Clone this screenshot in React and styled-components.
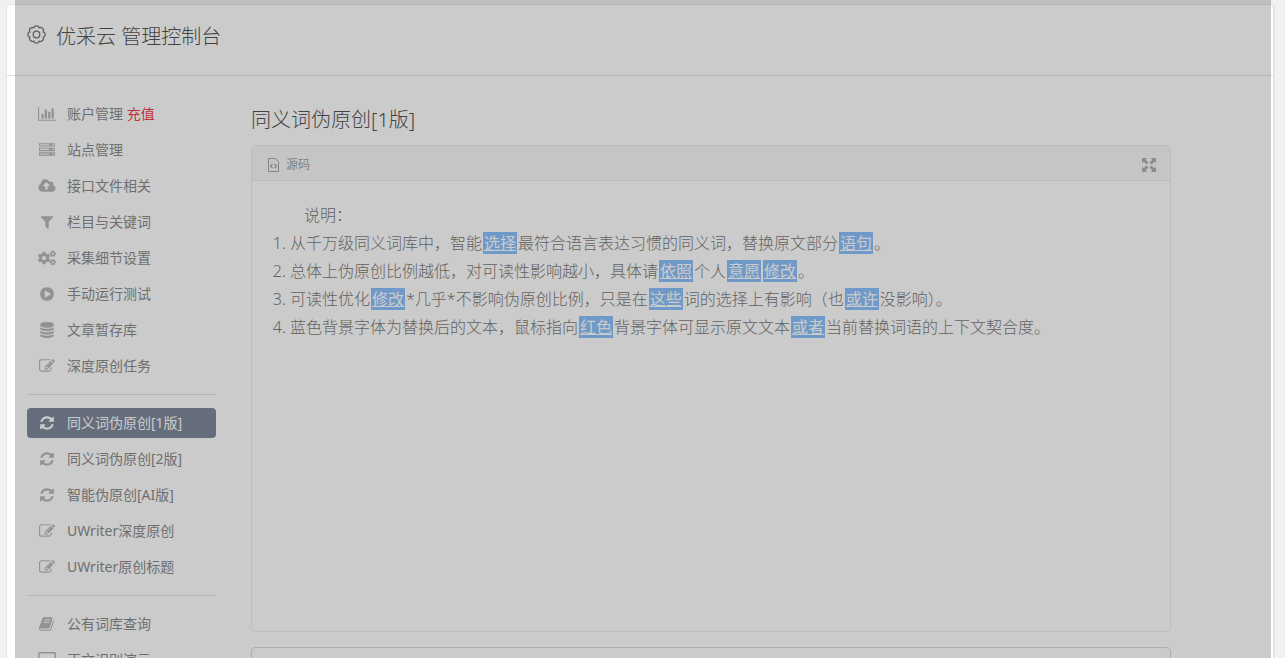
import React from "react";
import styled, { createGlobalStyle, css } from "styled-components";
import { FaCogs } from "react-icons/fa";

const Global = createGlobalStyle`
  * { box-sizing: border-box; }
  html, body { margin: 0; }
  body {
    background: #f1f1f1;
    color: #7c7c7c;
    font-family: "Noto Sans", "Noto Sans CJK SC", sans-serif;
    font-size: 14px;
    font-weight: 300;
  }
`;

const Page = styled.div`
  position: relative;
  height: 100vh;
  overflow: hidden;
  padding: 4px 10px 0 6px;
`;

const Overlay = styled.div`
  position: absolute;
  inset: 0 14px 0 15px;
  background: rgba(0, 0, 0, 0.205);
  pointer-events: none;
`;

const Card = styled.div`
  background: #fff;
  border: 1px solid #e4e4e4;
  border-right-width: 2px;
  border-radius: 4px 4px 0 0;
  min-height: 100vh;
`;

const Header = styled.header`
  display: flex;
  align-items: flex-start;
  gap: 10px;
  height: 71px;
  padding: 16px 20px 0;
  border-bottom: 1px solid #e1e1e1;
`;

const HeaderTitle = styled.h1`
  margin: 0;
  font-size: 20px;
  line-height: 32px;
  font-weight: 300;
  color: #555;
`;

const HeaderIcon = styled.svg`
  width: 19px;
  height: 19px;
  margin-top: 4px;
  color: #777;
`;

const Columns = styled.div`
  display: flex;
  gap: 35px;
  padding: 23px 102px 0 20px;
`;

const Sidebar = styled.nav`
  flex: 0 0 189px;
`;

const NavList = styled.ul`
  list-style: none;
  margin: 0;
  padding: 0;
  display: flex;
  flex-direction: column;
  gap: 6px;

  & + & {
    margin-top: 13px;
    padding-top: 13px;
    border-top: 1px solid #e1e1e1;
  }
`;

const NavLink = styled.a`
  display: flex;
  align-items: center;
  gap: 10px;
  height: 30px;
  padding: 0 10px;
  border-radius: 4px;
  color: #8c8c8c;
  font-weight: 400;
  text-decoration: none;
  white-space: nowrap;
  line-height: 20px;

  svg { color: #b8b8b8; }

  ${(p) =>
    p.$active &&
    css`
      background: #808a9d;
      color: #fff;
      svg { color: #fff; }
    `}
`;

const IconSlot = styled.span`
  display: flex;
  justify-content: center;
  flex: 0 0 20px;
`;

const Red = styled.span`
  color: #f0404a;
`;

const Main = styled.main`
  flex: 1;
  min-width: 0;
`;

const PageTitle = styled.h2`
  margin: 0 0 9px;
  padding-top: 5px;
  font-size: 20px;
  line-height: 32px;
  font-weight: 300;
  color: #555;
`;

const Panel = styled.section`
  border: 1px solid #ededed;
  border-radius: 4px;
`;

const PanelHead = styled.div`
  display: flex;
  align-items: center;
  gap: 7px;
  height: 35px;
  padding: 3px 14px 0 16px;
  background: #f8f8f8;
  border-bottom: 1px solid #ebebeb;
`;

const PanelTitle = styled.h3`
  margin: 0;
  flex: 1;
  font-size: 12px;
  font-weight: 300;
  line-height: 20px;
`;

const ExpandButton = styled.button`
  display: flex;
  padding: 0;
  border: 0;
  background: none;
  color: #b0b0b0;
`;

const PanelBody = styled.div`
  min-height: 450px;
  padding: 20px;
  font-size: 16px;
  line-height: 28px;
`;

const Intro = styled.p`
  margin: 0;
  text-indent: 2em;
`;

const Notes = styled.ol`
  margin: 0;
  padding-left: 18px;
`;

const Swap = styled.a`
  margin: 0 1px;
  padding: 0 1px;
  background: #8cc0fb;
  color: #fff;
  font-weight: 400;
  text-decoration: underline;
`;

const NextPanel = styled.section`
  height: 120px;
  margin-top: 15px;
  border: 1px solid #dadada;
  border-radius: 4px;
`;

const paths = {
  chart: ["0 0 2048 1792", 18, "M640 896v512h-256v-512h256zm384-512v1024h-256v-1024h256zm1024 1152v128h-2048v-1536h128v1408h1920zm-640-896v768h-256v-768h256zm384-384v1152h-256v-1152h256z"],
  server: ["0 0 1792 1792", 16, "M128 1408h1024v-128h-1024v128zm0-512h1024v-128h-1024v128zm1568 448q0-40-28-68t-68-28-68 28-28 68 28 68 68 28 68-28 28-68zm-1568-960h1024v-128h-1024v128zm1568 448q0-40-28-68t-68-28-68 28-28 68 28 68 68 28 68-28 28-68zm0-512q0-40-28-68t-68-28-68 28-28 68 28 68 68 28 68-28 28-68zm96 832v384h-1792v-384h1792zm0-512v384h-1792v-384h1792zm0-512v384h-1792v-384h1792z"],
  cloud: ["-64 0 1920 1792", 18, "M1216 864q0-14-9-23l-352-352q-9-9-23-9t-23 9l-351 351q-10 12-10 24 0 14 9 23t23 9h224v352q0 13 9.5 22.5t22.5 9.5h192q13 0 22.5-9.5t9.5-22.5v-352h224q13 0 22.5-9.5t9.5-22.5zm640 288q0 159-112.5 271.5t-271.5 112.5h-1088q-185 0-316.5-131.5t-131.5-316.5q0-130 70-240t188-165q-2-30-2-43 0-212 150-362t362-150q156 0 285.5 87t188.5 231q71-62 166-62 106 0 181 75t75 181q0 76-41 138 130 31 213.5 135.5t83.5 238.5z"],
  filter: ["0 0 1792 1792", 16, "M1595 295q17 41-14 70l-493 493v742q0 42-39 59-13 5-25 5-27 0-45-19l-256-256q-19-19-19-45v-486l-493-493q-31-29-14-70 17-39 59-39h1280q42 0 59 39z"],
  play: ["0 0 1792 1792", 16, "M896 128q209 0 385.5 103t279.5 279.5 103 385.5-103 385.5-279.5 279.5-385.5 103-385.5-103-279.5-279.5-103-385.5 103-385.5 279.5-279.5 385.5-103zm384 823q32-18 32-55t-32-55l-544-320q-31-19-64-1-32 19-32 56v640q0 37 32 56 16 8 32 8 17 0 32-9z"],
  database: ["0 0 1792 1792", 16, "M896 768q237 0 443-43t325-127v170q0 69-103 128t-280 93.5-385 34.5-385-34.5-280-93.5-103-128v-170q119 84 325 127t443 43zm0 768q237 0 443-43t325-127v170q0 69-103 128t-280 93.5-385 34.5-385-34.5-280-93.5-103-128v-170q119 84 325 127t443 43zm0-384q237 0 443-43t325-127v170q0 69-103 128t-280 93.5-385 34.5-385-34.5-280-93.5-103-128v-170q119 84 325 127t443 43zm0-1152q208 0 385 34.5t280 93.5 103 128v128q0 69-103 128t-280 93.5-385 34.5-385-34.5-280-93.5-103-128v-128q0-69 103-128t280-93.5 385-34.5z"],
  edit: ["0 0 1792 1792", 16, "M888 1184l116-116-152-152-116 116v56h96v96h56zm440-720q-16-16-33 1l-350 350q-17 17-1 33t33-1l350-350q17-17 1-33zm80 594v190q0 119-84.5 203.5t-203.5 84.5h-832q-119 0-203.5-84.5t-84.5-203.5v-832q0-119 84.5-203.5t203.5-84.5h832q63 0 117 25 15 7 18 23 3 17-9 29l-49 49q-14 14-32 8-23-6-45-6h-832q-66 0-113 47t-47 113v832q0 66 47 113t113 47h832q66 0 113-47t47-113v-126q0-13 9-22l64-64q15-15 35-7t20 29zm-96-738l288 288-672 672h-288v-288zm444 132l-92 92-288-288 92-92q28-28 68-28t68 28l152 152q28 28 28 68t-28 68z"],
  refresh: ["0 0 1792 1792", 16, "M1639 1056q0 5-1 7-64 268-268 434.5t-478 166.5q-146 0-282.5-55t-243.5-157l-129 129q-19 19-45 19t-45-19-19-45v-448q0-26 19-45t45-19h448q26 0 45 19t19 45-19 45l-137 137q71 66 161 102t187 36q134 0 250-65t186-179q11-17 53-117 8-23 30-23h192q13 0 22.5 9.5t9.5 22.5zm25-800v448q0 26-19 45t-45 19h-448q-26 0-45-19t-19-45 19-45l138-138q-148-137-349-137-134 0-250 65t-186 179q-11 17-53 117-8 23-30 23h-199q-13 0-22.5-9.5t-9.5-22.5v-7q65-268 270-434.5t480-166.5q146 0 284 55.5t245 156.5l130-129q19-19 45-19t45 19 19 45z"],
  book: ["0 0 1792 1792", 16, "M1639 478q40 57 18 129l-275 906q-19 64-76.5 107.5t-122.5 43.5h-923q-77 0-148.5-53.5t-99.5-131.5q-24-67-2-127 0-4 3-27t4-37q1-8-3-21.5t-3-19.5q2-11 8-21t16.5-23.5 16.5-23.5q23-38 45-91.5t30-91.5q3-10 .5-30t-.5-28q3-11 17-28t17-23q21-36 42-92t25-90q1-9-2.5-32t.5-28q4-13 22-30.5t22-22.5q19-26 42.5-84.5t27.5-96.5q1-8-3-25.5t-2-26.5q2-8 9-18t18-23 17-21q8-12 16.5-30.5t15-35 16-36 19.5-32 26.5-23.5 36-11.5 47.5 5.5l-1 3q38-9 51-9h761q74 0 114 56t18 130l-274 906q-36 119-71.5 153.5t-128.5 34.5h-869q-27 0-38 15-11 16-1 43 24 70 144 70h923q29 0 56-15.5t35-41.5l300-987q7-22 5-57 38 15 59 43zm-1064 2q-4 13 2 22.5t20 9.5h608q13 0 25.5-9.5t16.5-22.5l21-64q4-13-2-22.5t-20-9.5h-608q-13 0-25.5 9.5t-16.5 22.5zm-83 256q-4 13 2 22.5t20 9.5h608q13 0 25.5-9.5t16.5-22.5l21-64q4-13-2-22.5t-20-9.5h-608q-13 0-25.5 9.5t-16.5 22.5z"],
  desktop: ["0 0 18 16", 18, "M1.500 0h15a1.500 1.500 0 0 1 1.500 1.500v10a1.500 1.500 0 0 1-1.500 1.500h-5v2h2v1h-9v-1h2v-2h-5a1.500 1.500 0 0 1-1.500-1.500v-10a1.500 1.500 0 0 1 1.500-1.500zM1.500 1.500v8h15v-8z"],
};

function Icon({ name }) {
  if (name === "cogs") return <FaCogs size={18} aria-hidden="true" />;
  const [box, width, d] = paths[name];
  return (
    <svg viewBox={box} width={width} height="16" fill="currentColor" fillRule="evenodd" aria-hidden="true">
      <path d={d} />
    </svg>
  );
}

const groups = [
  [
    ["chart", "账户管理", false, "充值"],
    ["server", "站点管理"],
    ["cloud", "接口文件相关"],
    ["filter", "栏目与关键词"],
    ["cogs", "采集细节设置"],
    ["play", "手动运行测试"],
    ["database", "文章暂存库"],
    ["edit", "深度原创任务"],
  ],
  [
    ["refresh", "同义词伪原创[1版]", true],
    ["refresh", "同义词伪原创[2版]"],
    ["refresh", "智能伪原创[AI版]"],
    ["edit", "UWriter深度原创"],
    ["edit", "UWriter原创标题"],
  ],
  [
    ["book", "公有词库查询"],
    ["desktop", "正文识别演示"],
  ],
];

const S = ({ children }) => <Swap href="#">{children}</Swap>;

export default function App() {
  return (
    <>
      <Global />
      <Page>
        <Card>
          <Header>
            <HeaderIcon viewBox="0 0 19 19" fill="none" stroke="currentColor" strokeWidth="1.3" aria-hidden="true">
              <path d="M7.500 1.500Q9.500 .2 11.500 1.500L12 2.800L13.700 2.400Q16.200 2.800 16.600 5.300L16.200 7L17.500 7.500Q18.800 9.500 17.500 11.500L16.200 12L16.600 13.700Q16.200 16.200 13.700 16.600L12 16.200L11.500 17.500Q9.500 18.800 7.500 17.500L7 16.200L5.300 16.600Q2.800 16.200 2.400 13.700L2.800 12L1.500 11.500Q.2 9.500 1.500 7.500L2.800 7L2.400 5.300Q2.800 2.800 5.300 2.400L7 2.800Z" />
              <circle cx="9.500" cy="9.500" r="3.300" />
            </HeaderIcon>
            <HeaderTitle>优采云 管理控制台</HeaderTitle>
          </Header>
          <Columns>
            <Sidebar>
              {groups.map((items, i) => (
                <NavList key={i}>
                  {items.map(([icon, label, active, extra]) => (
                    <li key={label}>
                      <NavLink href="#" $active={active}>
                        <IconSlot><Icon name={icon} /></IconSlot>
                        <span>{label}{extra && <> <Red>{extra}</Red></>}</span>
                      </NavLink>
                    </li>
                  ))}
                </NavList>
              ))}
            </Sidebar>
            <Main>
              <PageTitle>同义词伪原创[1版]</PageTitle>
              <Panel>
                <PanelHead>
                  <svg width="11" height="14" viewBox="0 0 11 14" fill="none" stroke="#a8a8a8" aria-hidden="true">
                    <path d="M.5 .5h7l3 3v10h-10z" />
                    <path d="M4.500 6l-2 2 2 2M6.500 6l2 2-2 2" strokeWidth="1.300" />
                  </svg>
                  <PanelTitle>源码</PanelTitle>
                  <ExpandButton type="button" aria-label="全屏">
                    <svg width="14" height="14" viewBox="0 0 14 14" fill="currentColor" aria-hidden="true">
                      <path d="M0 0h5.200L3.700 1.700 6.400 4.400 4.400 6.400 1.700 3.700 0 5.200zM14 0v5.200L12.300 3.700 9.600 6.400 7.600 4.400 10.300 1.700 8.800 0zM0 14V8.800L1.700 10.300 4.400 7.600 6.400 9.600 3.700 12.300 5.200 14zM14 14H8.800L10.300 12.300 7.600 9.600 9.600 7.600 12.300 10.300 14 8.800z" />
                    </svg>
                  </ExpandButton>
                </PanelHead>
                <PanelBody>
                  <Intro>说明：</Intro>
                  <Notes>
                    <li>从千万级同义词库中，智能<S>选择</S>最符合语言表达习惯的同义词，替换原文部分<S>语句</S>。</li>
                    <li>总体上伪原创比例越低，对可读性影响越小，具体请<S>依照</S>个人<S>意愿</S><S>修改</S>。</li>
                    <li>可读性优化<S>修改</S>*几乎*不影响伪原创比例，只是在<S>这些</S>词的选择上有影响（也<S>或许</S>没影响）。</li>
                    <li>蓝色背景字体为替换后的文本，鼠标指向<S>红色</S>背景字体可显示原文文本<S>或者</S>当前替换词语的上下文契合度。</li>
                  </Notes>
                </PanelBody>
              </Panel>
              <NextPanel />
            </Main>
          </Columns>
        </Card>
        <Overlay />
      </Page>
    </>
  );
}
